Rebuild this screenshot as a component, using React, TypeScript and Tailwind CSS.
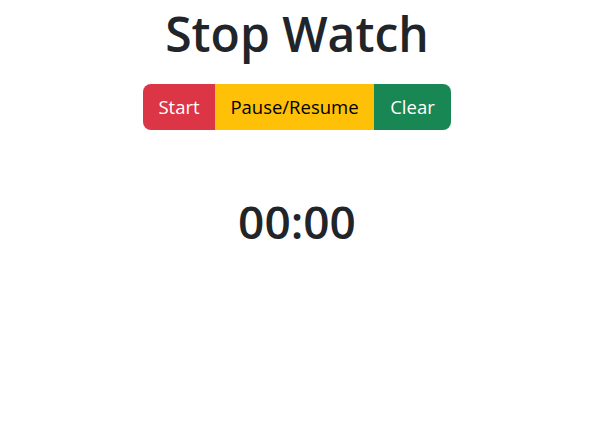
export default function App() {
  return (
    <div
      className="flex flex-col items-center pr-[9px] text-[#212529] bg-white min-h-[437px]"
      style={{ fontFamily: '"Open Sans", "Noto Sans", sans-serif' }}
    >
      <h1 className="mt-[5px] text-[48px] leading-[1.2] font-semibold">Stop Watch</h1>
      <div className="mt-[21px] flex rounded-[8px] overflow-hidden text-[18.5px] leading-[30px]">
        <button className="w-[72px] h-[46px] bg-[#dc3545] text-white">Start</button>
        <button className="w-[159px] h-[46px] bg-[#ffc107] text-black">Pause/Resume</button>
        <button className="w-[77px] h-[46px] bg-[#198754] text-white">Clear</button>
      </div>
      <div className="mt-[64px] text-[46px] leading-[1.2] font-semibold">00:00</div>
    </div>
  )
}
